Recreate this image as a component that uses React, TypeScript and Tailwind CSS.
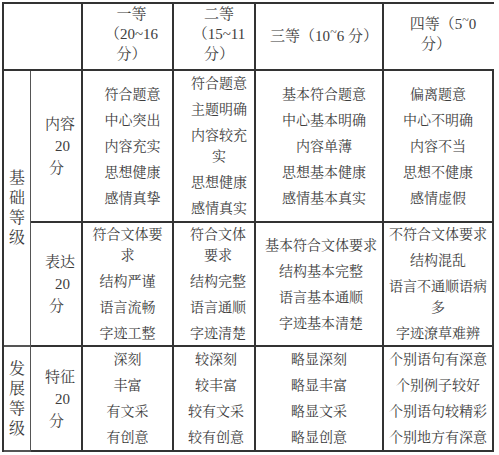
import React from "react";

type Item = string[];

const line = "border-[#333]";
const font = "font-['Liberation_Serif','Noto_Serif_CJK_SC','Noto_Sans_CJK_SC',serif]";

const Tilde = () => <span className="inline-block -translate-y-[5px] text-[12px]">~</span>;

const Lines = ({ items, className = "" }: { items: Item[]; className?: string }) => (
  <div className={`flex flex-col items-center justify-center gap-[5px] border-r-2 border-b-2 ${line} ${className}`}>
    {items.map((lines, i) => (
      <div key={i} className="flex flex-col items-center">
        {lines.map((l, j) => (
          <span key={j} className="whitespace-nowrap leading-[21px]">
            {l}
          </span>
        ))}
      </div>
    ))}
  </div>
);

const Label = ({ title }: { title: string }) => (
  <div className={`flex flex-col justify-center pl-[14px] text-[15px] leading-[22px] border-r-2 border-b-2 ${line}`}>
    <span>{title}</span>
    <span className="pl-[10px]">20</span>
    <span className="pl-[4px]">分</span>
  </div>
);

const Vertical = ({ text }: { text: string }) => (
  <div className={`row-span-2 flex flex-col items-center justify-center text-[16px] leading-[20px] border-r border-b-2 border-[#555]`}>
    {text.split("").map((c, i) => (
      <span key={i}>{c}</span>
    ))}
  </div>
);

export default function App() {
  return (
    <div className={`min-h-[455px] w-[499px] bg-white pl-[2px] pt-[2px] text-[14px] text-[#3d3d3d] ${font}`}>
      <div className={`grid w-[492px] grid-cols-[27px_52px_91px_82px_128px_110px] grid-rows-[67px_152px_124px_105px] border-t-2 border-l-2 ${line}`}>
        {/* header */}
        <div className={`col-span-2 border-r-2 border-b-2 ${line}`} />
        <div className={`flex flex-col items-center justify-center pb-[6px] pl-[8px] text-[15px] leading-[20px] border-r-2 border-b-2 ${line}`}>
          <span>一等</span>
          <span>（20~16</span>
          <span>分）</span>
        </div>
        <div className={`flex flex-col items-center justify-center pb-[6px] pl-[10px] text-[15px] leading-[20px] border-r-2 border-b-2 ${line}`}>
          <span>二等</span>
          <span>（15~11</span>
          <span>分）</span>
        </div>
        <div className={`flex items-center justify-center pl-[10px] text-[15px] border-r-2 border-b-2 ${line}`}>
          <span>
            三等（10<Tilde />6 分）
          </span>
        </div>
        <div className={`flex flex-col items-center justify-center pb-[4px] pl-[8px] text-[15px] leading-[19px] border-b-2 ${line}`}>
          <span>
            四等（5<Tilde />0
          </span>
          <span className="pr-[14px]">分）</span>
        </div>

        {/* 内容 */}
        <Vertical text="基础等级" />
        <Label title="内容" />
        <Lines className="pl-[10px]" items={[["符合题意"], ["中心突出"], ["内容充实"], ["思想健康"], ["感情真挚"]]} />
        <Lines className="pl-[10px]" items={[["符合题意"], ["主题明确"], ["内容较充", "实"], ["思想健康"], ["感情真实"]]} />
        <Lines className="pl-[10px]" items={[["基本符合题意"], ["中心基本明确"], ["内容单薄"], ["思想基本健康"], ["感情基本真实"]]} />
        <Lines className="border-r-0" items={[["偏离题意"], ["中心不明确"], ["内容不当"], ["思想不健康"], ["感情虚假"]]} />

        {/* 表达 */}
        <Label title="表达" />
        <Lines items={[["符合文体要", "求"], ["结构严谨"], ["语言流畅"], ["字迹工整"]]} />
        <Lines className="pl-[8px]" items={[["符合文体", "要求"], ["结构完整"], ["语言通顺"], ["字迹清楚"]]} />
        <Lines className="pl-[4px]" items={[["基本符合文体要求"], ["结构基本完整"], ["语言基本通顺"], ["字迹基本清楚"]]} />
        <Lines className="border-r-0" items={[["不符合文体要求"], ["结构混乱"], ["语言不通顺语病", "多"], ["字迹潦草难辨"]]} />

        {/* 发展等级 */}
        <div className="flex flex-col items-center justify-center text-[16px] leading-[20px] border-r border-b-2 border-[#555]">
          {"发展等级".split("").map((c, i) => (
            <span key={i}>{c}</span>
          ))}
        </div>
        <Label title="特征" />
        <Lines items={[["深刻"], ["丰富"], ["有文采"], ["有创意"]]} />
        <Lines className="pl-[4px]" items={[["较深刻"], ["较丰富"], ["较有文采"], ["较有创意"]]} />
        <Lines items={[["略显深刻"], ["略显丰富"], ["略显文采"], ["略显创意"]]} />
        <Lines className="border-r-0" items={[["个别语句有深意"], ["个别例子较好"], ["个别语句较精彩"], ["个别地方有深意"]]} />
      </div>
    </div>
  );
}
